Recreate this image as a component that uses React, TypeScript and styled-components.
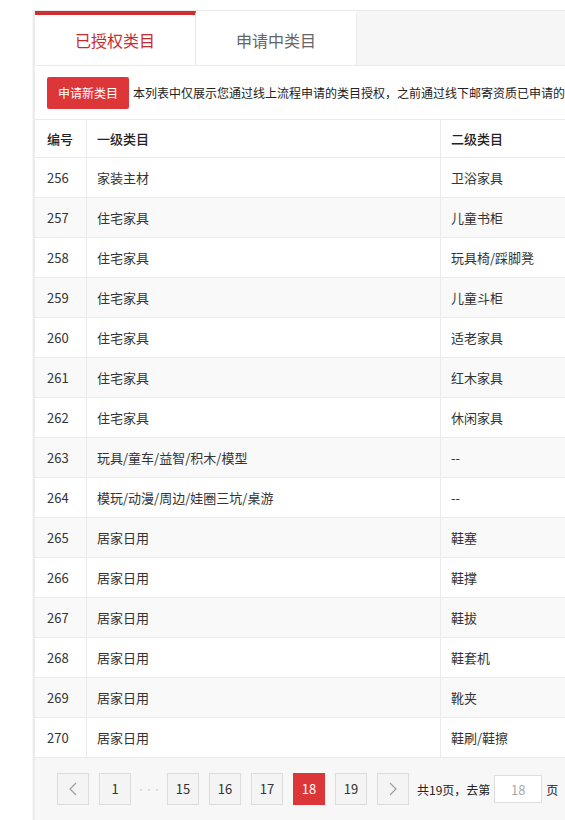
import React from "react";
import styled, { createGlobalStyle } from "styled-components";

const Global = createGlobalStyle`
  html, body {
    margin: 0;
    padding: 0;
    background: #ffffff;
    overflow: hidden;
  }
  body {
    font-family: "Noto Sans CJK SC", "Noto Sans", sans-serif;
    color: #333;
  }
  * { box-sizing: border-box; }
`;

const Page = styled.div`
  width: 900px;
  padding-top: 10px;
  padding-left: 33px;
`;

const Frame = styled.div`
  border-left: 2px solid #ececec;
  box-shadow: -1px 0 0 #f6f6f6;
`;

const TabBar = styled.div`
  display: flex;
  height: 55px;
  border-top: 1px solid #e9e9e9;
  background: #f6f6f6;
`;

const Tab = styled.div<{ $active?: boolean }>`
  width: 161px;
  height: 54px;
  display: flex;
  align-items: center;
  justify-content: center;
  background: #fff;
  border-right: 1px solid #e8e8e8;
  border-top: 4px solid ${(p) => (p.$active ? "#cf2f30" : "#fff")};
  font-size: 16px;
  line-height: 20px;
  color: ${(p) => (p.$active ? "#c92a2d" : "#666")};
`;

const Panel = styled.div`
  border-top: 1px solid #ececec;
  background: #fff;
`;

const Toolbar = styled.div`
  display: flex;
  align-items: center;
  padding: 11px 12px 10px 12px;
  white-space: nowrap;
  overflow: hidden;
`;

const PrimaryButton = styled.button`
  flex: none;
  height: 32px;
  padding: 0 11px;
  border: none;
  border-radius: 2px;
  background: #dd3638;
  color: #fff;
  font-family: inherit;
  font-size: 12px;
  line-height: 32px;
  cursor: pointer;
`;

const Notice = styled.span`
  margin-left: 4px;
  font-size: 12px;
  line-height: 16px;
  color: #222;
`;

const Row = styled.div<{ $head?: boolean; $striped?: boolean }>`
  display: grid;
  grid-template-columns: 52px 354px 1fr;
  height: ${(p) => (p.$head ? "39px" : "40px")};
  border-top: ${(p) => (p.$head ? "1px solid #ebebeb" : "none")};
  border-bottom: 1px solid #ebebeb;
  background: ${(p) => (p.$striped ? "#f9f9f9" : "#fff")};
`;

const Cell = styled.div<{ $head?: boolean; $first?: boolean }>`
  display: flex;
  align-items: center;
  padding-left: ${(p) => (p.$first ? "12px" : "10px")};
  border-right: 1px solid #ebebeb;
  font-size: 13px;
  line-height: 18px;
  color: ${(p) => (p.$head ? "#222" : "#333")};
  font-weight: ${(p) => (p.$head ? 500 : 400)};
  white-space: nowrap;
`;

const Pager = styled.div`
  display: flex;
  align-items: flex-start;
  gap: 10px;
  padding: 15px 0 20px 22px;
  background: #f7f7f7;
  height: 80px;
`;

const PageBtn = styled.div<{ $active?: boolean }>`
  width: 32px;
  height: 32px;
  display: flex;
  align-items: center;
  justify-content: center;
  border: 1px solid ${(p) => (p.$active ? "#dd3638" : "#dcdcdc")};
  background: ${(p) => (p.$active ? "#dd3638" : "#f4f4f4")};
  color: ${(p) => (p.$active ? "#fff" : "#333")};
  font-size: 13px;
  line-height: 16px;
`;

const Ellipsis = styled.span`
  width: 16px;
  height: 32px;
  display: flex;
  align-items: center;
  justify-content: center;
  color: #c4c4c4;
  font-size: 8px;
  letter-spacing: 0;
`;

const JumpGroup = styled.div`
  display: flex;
  align-items: center;
  height: 32px;
  margin-left: -2px;
  font-size: 12px;
  color: #222;
  white-space: nowrap;
`;

const JumpInput = styled.div`
  width: 48px;
  height: 28px;
  margin: 0 4px 0 4px;
  display: flex;
  align-items: center;
  justify-content: center;
  background: #fff;
  border: 1px solid #dedede;
  color: #aaa;
  font-size: 13px;
`;

const Chevron = ({ dir }: { dir: "left" | "right" }) => (
  <svg width="8" height="14" viewBox="0 0 8 14" fill="none">
    <polyline
      points={dir === "left" ? "7,1 1,7 7,13" : "1,1 7,7 1,13"}
      stroke="#9a9a9a"
      strokeWidth="1.1"
    />
  </svg>
);

const rows: [number, string, string][] = [
  [256, "家装主材", "卫浴家具"],
  [257, "住宅家具", "儿童书柜"],
  [258, "住宅家具", "玩具椅/踩脚凳"],
  [259, "住宅家具", "儿童斗柜"],
  [260, "住宅家具", "适老家具"],
  [261, "住宅家具", "红木家具"],
  [262, "住宅家具", "休闲家具"],
  [263, "玩具/童车/益智/积木/模型", "--"],
  [264, "模玩/动漫/周边/娃圈三坑/桌游", "--"],
  [265, "居家日用", "鞋塞"],
  [266, "居家日用", "鞋撑"],
  [267, "居家日用", "鞋拔"],
  [268, "居家日用", "鞋套机"],
  [269, "居家日用", "靴夹"],
  [270, "居家日用", "鞋刷/鞋擦"],
];

export default function App() {
  return (
    <>
      <Global />
      <Page>
        <Frame>
          <TabBar>
            <Tab $active>已授权类目</Tab>
            <Tab>申请中类目</Tab>
          </TabBar>
          <Panel>
            <Toolbar>
              <PrimaryButton>申请新类目</PrimaryButton>
              <Notice>
                本列表中仅展示您通过线上流程申请的类目授权，之前通过线下邮寄资质已申请的类目不在此列表中展示
              </Notice>
            </Toolbar>
            <Row $head>
              <Cell $head $first>编号</Cell>
              <Cell $head>一级类目</Cell>
              <Cell $head>二级类目</Cell>
            </Row>
            {rows.map(([id, a, b]) => (
              <Row key={id} $striped={id % 2 === 1}>
                <Cell $first>{id}</Cell>
                <Cell>{a}</Cell>
                <Cell>{b}</Cell>
              </Row>
            ))}
            <Pager>
              <PageBtn>
                <Chevron dir="left" />
              </PageBtn>
              <PageBtn>1</PageBtn>
              <Ellipsis>···</Ellipsis>
              <PageBtn>15</PageBtn>
              <PageBtn>16</PageBtn>
              <PageBtn>17</PageBtn>
              <PageBtn $active>18</PageBtn>
              <PageBtn>19</PageBtn>
              <PageBtn>
                <Chevron dir="right" />
              </PageBtn>
              <JumpGroup>
                共19页，去第
                <JumpInput>18</JumpInput>
                页
              </JumpGroup>
            </Pager>
          </Panel>
        </Frame>
      </Page>
    </>
  );
}
